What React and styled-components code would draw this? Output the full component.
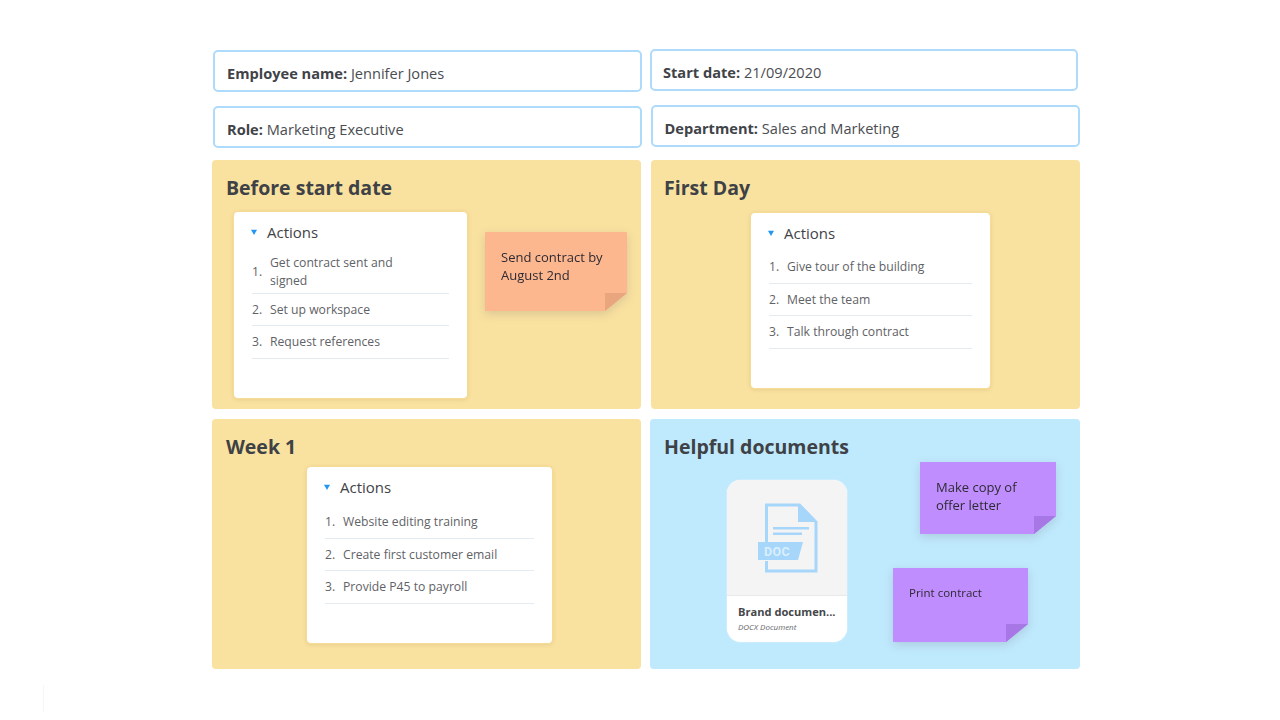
import styled, { createGlobalStyle } from 'styled-components';

const GlobalStyle = createGlobalStyle`
  html, body {
    margin: 0;
    padding: 0;
    background: #ffffff;
    font-family: "Open Sans", "Liberation Sans", sans-serif;
  }
`;

const Page = styled.div`
  width: 1280px;
  height: 720px;
  overflow: hidden;
  padding-top: 49px;
  box-sizing: border-box;
`;

const Board = styled.div`
  width: 868px;
  margin-left: 212px;
`;

const FieldRow = styled.div`
  display: flex;
  align-items: flex-start;
  margin-bottom: ${(p) => p.$gap}px;
`;

const Field = styled.div`
  box-sizing: border-box;
  width: ${(p) => p.$width || 429}px;
  height: 42px;
  margin-left: ${(p) => p.$left}px;
  margin-top: ${(p) => p.$top || 0}px;
  padding: 3px 0 0 ${(p) => p.$pad || 12}px;
  display: flex;
  align-items: center;
  border: 2px solid #aedbfb;
  border-radius: 5px;
  background: #fff;
  font-size: 14.6px;
  color: #4a4d51;
  white-space: pre;

  b {
    font-weight: 700;
    color: #404347;
  }
`;

const PanelGrid = styled.div`
  display: grid;
  grid-template-columns: 429px 429px;
  grid-template-rows: 249px 250px;
  gap: 10px;
`;

const Panel = styled.section`
  position: relative;
  border-radius: 4px;
  background: ${(p) => (p.$blue ? '#bfe9fd' : '#f9e1a0')};
  margin-left: ${(p) => p.$shift || 0}px;
`;

const PanelTitle = styled.h2`
  margin: 0;
  padding: 14px 14px 0 ${(p) => p.$pad || 14}px;
  height: 28px;
  font-size: 19.5px;
  line-height: 28px;
  font-weight: 700;
  color: #3e4145;
`;

const ActionCard = styled.div`
  box-sizing: border-box;
  width: ${(p) => p.$width}px;
  height: ${(p) => p.$height}px;
  margin-top: ${(p) => p.$top}px;
  margin-left: ${(p) => p.$left}px;
  padding: 9px 18px 0;
  background: #fff;
  border-radius: 4px;
  box-shadow: 0 0 0 1.5px #f4dc96, 0 1px 4px rgba(150, 120, 40, 0.3);
`;

const ActionsHeader = styled.div`
  display: flex;
  align-items: center;
  height: 21px;
  margin-bottom: ${(p) => p.$gap + 1}px;
  font-size: 15px;
  font-weight: 500;
  color: #3f4347;
`;

const Caret = styled.svg`
  width: 6px;
  height: 6px;
  margin-left: -1.5px;
  margin-right: 10.5px;
`;

const ActionList = styled.ol`
  list-style: none;
  margin: 0;
  padding: 0;
`;

const ActionRow = styled.li`
  box-sizing: border-box;
  display: flex;
  align-items: center;
  height: ${(p) => p.$height || 32.5}px;
  padding-top: ${(p) => p.$pad || 1}px;
  border-bottom: 1.5px solid #e4ecf3;
  font-size: 12.2px;
  line-height: 18px;
  color: #5f6266;
`;

const RowNumber = styled.span`
  flex: 0 0 18px;
`;

const StickyNote = styled.div`
  position: absolute;
  left: ${(p) => p.$x}px;
  top: ${(p) => p.$y}px;
  width: ${(p) => p.$width}px;
  height: ${(p) => p.$height}px;
  filter: drop-shadow(0 3px 5px rgba(90, 80, 90, 0.18));
`;

const NoteSheet = styled.div`
  box-sizing: border-box;
  width: 100%;
  height: 100%;
  padding: 16px 16px 0;
  background: ${(p) => p.$color};
  clip-path: polygon(0 0, 100% 0, 100% calc(100% - 18px), calc(100% - 22px) 100%, 0 100%);
  font-size: ${(p) => p.$size || 13}px;
  line-height: 18px;
  color: #2e2a33;
`;

const NoteFold = styled.div`
  position: absolute;
  right: 0;
  bottom: 0;
  width: 22px;
  height: 18px;
  background: ${(p) => p.$color};
  clip-path: polygon(100% 0, 0 0, 0 100%);
`;

const DocCard = styled.div`
  width: 120px;
  height: 162px;
  margin-top: 19px;
  margin-left: 77px;
  border-radius: 14px;
  overflow: hidden;
  background: #fff;
  box-shadow: 0 0 2px rgba(255, 255, 255, 0.8);
`;

const DocPreview = styled.div`
  display: flex;
  justify-content: center;
  height: 115px;
  border-bottom: 1px solid #e9e9e9;
  background: #f4f4f4;
`;

const DocIcon = styled.svg`
  width: 60px;
  height: 70px;
  margin-top: 23px;
  margin-left: 1px;
`;

const DocInfo = styled.div`
  padding: 8px 11px 0;
`;

const DocName = styled.div`
  font-size: 11.1px;
  line-height: 15px;
  font-weight: 700;
  color: #45474a;
  white-space: nowrap;
`;

const DocType = styled.div`
  margin-top: 2px;
  font-size: 8px;
  line-height: 12px;
  font-style: italic;
  color: #66686b;
`;

const FaintMark = styled.div`
  width: 1px;
  height: 27px;
  margin-top: 16px;
  margin-left: 43px;
  background: #f6f6f6;
`;

function Actions({ items, width, height, top, left, gap }) {
  return (
    <ActionCard $width={width} $height={height} $top={top} $left={left}>
      <ActionsHeader $gap={gap}>
        <Caret viewBox="0 0 7 7">
          <path d="M0 1h7L3.5 7z" fill="#2196f3" />
        </Caret>
        Actions
      </ActionsHeader>
      <ActionList>
        {items.map((item, i) => (
          <ActionRow key={i} $height={item.height} $pad={item.pad}>
            <RowNumber>{i + 1}.</RowNumber>
            <span>{item.text}</span>
          </ActionRow>
        ))}
      </ActionList>
    </ActionCard>
  );
}

function Note({ x, y, width, height, color, fold, size, children }) {
  return (
    <StickyNote $x={x} $y={y} $width={width} $height={height}>
      <NoteSheet $color={color} $size={size}>{children}</NoteSheet>
      <NoteFold $color={fold} />
    </StickyNote>
  );
}

const firstActions = [
  { text: <>Get contract sent and<br />signed</>, height: 50.5, pad: 8 },
  { text: 'Set up workspace' },
  { text: 'Request references' },
];

const dayActions = [
  { text: 'Give tour of the building' },
  { text: 'Meet the team' },
  { text: 'Talk through contract' },
];

const weekActions = [
  { text: 'Website editing training' },
  { text: 'Create first customer email' },
  { text: 'Provide P45 to payroll' },
];

export default function App() {
  return (
    <Page>
      <GlobalStyle />
      <Board>
        <FieldRow $gap={13}>
          <Field $left={1} $top={1}><b>Employee name:</b> Jennifer Jones</Field>
          <Field $left={8} $width={428} $pad={11}><b>Start date:</b> 21/09/2020</Field>
        </FieldRow>
        <FieldRow $gap={12}>
          <Field $left={1} $top={1}><b>Role:</b> Marketing Executive</Field>
          <Field $left={9} $pad={11.5}><b>Department:</b> Sales and Marketing</Field>
        </FieldRow>
        <PanelGrid>
          <Panel>
            <PanelTitle>Before start date</PanelTitle>
            <Actions items={firstActions} width={233} height={186} top={10} left={22} gap={0} />
            <Note x={273} y={72} width={142} height={79} color="#fdb78f" fold="#e8a57e">
              Send contract by<br />August 2nd
            </Note>
          </Panel>
          <Panel>
            <PanelTitle $pad={13}>First Day</PanelTitle>
            <Actions items={dayActions} width={239} height={175} top={11} left={100} gap={7} />
          </Panel>
          <Panel>
            <PanelTitle>Week 1</PanelTitle>
            <Actions items={weekActions} width={245} height={176} top={6} left={95} gap={8} />
          </Panel>
          <Panel $blue $shift={-1}>
            <PanelTitle>Helpful documents</PanelTitle>
            <DocCard>
              <DocPreview>
                <DocIcon viewBox="0 0 60 70">
                  <path d="M8.5 40V2h33L58 19v49H8.5V58" fill="none" stroke="#a6d6fa" strokeWidth="3" />
                  <path d="M40 1l19 18H40z" fill="#a6d6fa" />
                  <path d="M15 24h36v2.500H15zM15 29.500h29v2.500H15z" fill="#a6d6fa" />
                  <path d="M0 39h45l-5 18H0z" fill="#a6d6fa" />
                  <text x="6" y="53" fontFamily="Roboto, sans-serif" fontSize="12.500" fontWeight="700" letterSpacing="0.4" fill="#d9effd">DOC</text>
                </DocIcon>
              </DocPreview>
              <DocInfo>
                <DocName>Brand documen...</DocName>
                <DocType>DOCX Document</DocType>
              </DocInfo>
            </DocCard>
            <Note x={270} y={43} width={136} height={72} color="#bf8dfd" fold="#a877e6">
              Make copy of<br />offer letter
            </Note>
            <Note x={243} y={149} width={135} height={74} color="#bf8dfd" fold="#a877e6" size={11.500}>
              Print contract
            </Note>
          </Panel>
        </PanelGrid>
      </Board>
      <FaintMark />
    </Page>
  );
}
